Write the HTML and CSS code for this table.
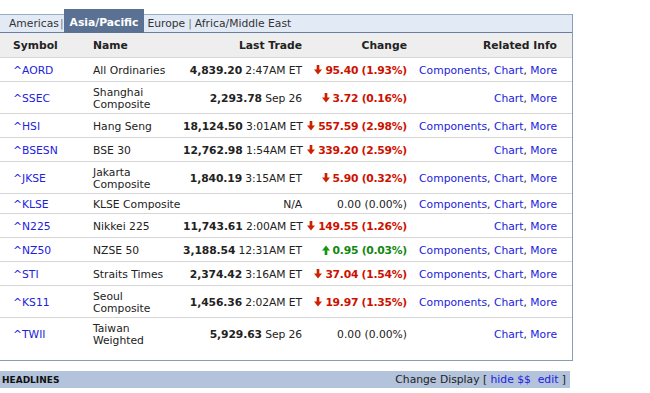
FILE: index.html
```html
<!DOCTYPE html>
<html>
<head>
<meta charset="utf-8">
<link rel="stylesheet" href="styles.css">
</head>
<body>
<div class="box">
  <div class="tabs">
    <span class="tab">Americas</span><span class="sep">|</span><span class="tab active">Asia/Pacific</span><span class="tab">Europe</span><span class="sep wide">|</span><span class="tab">Africa/Middle East</span>
  </div>
  <div class="row head">
    <div class="c1">Symbol</div><div class="c2">Name</div><div class="c3">Last Trade</div><div class="c4">Change</div><div class="c5">Related Info</div>
  </div>
  <div class="row">
    <div class="c1"><a>^AORD</a></div><div class="c2">All Ordinaries</div><div class="c3"><b>4,839.20</b> 2:47AM ET</div><div class="c4 dn"><svg class="arr" viewBox="0 0 9 11"><path d="M3 0h3v5h3l-4.5 5.5L0 5h3z"/></svg>95.40 (1.93%)</div><div class="c5"><a>Components</a>, <a>Chart</a>, <a>More</a></div>
  </div>
  <div class="row dbl">
    <div class="c1"><a>^SSEC</a></div><div class="c2">Shanghai<br>Composite</div><div class="c3"><b>2,293.78</b> Sep 26</div><div class="c4 dn"><svg class="arr" viewBox="0 0 9 11"><path d="M3 0h3v5h3l-4.5 5.5L0 5h3z"/></svg>3.72 (0.16%)</div><div class="c5"><a>Chart</a>, <a>More</a></div>
  </div>
  <div class="row">
    <div class="c1"><a>^HSI</a></div><div class="c2">Hang Seng</div><div class="c3"><b>18,124.50</b> 3:01AM ET</div><div class="c4 dn"><svg class="arr" viewBox="0 0 9 11"><path d="M3 0h3v5h3l-4.5 5.5L0 5h3z"/></svg>557.59 (2.98%)</div><div class="c5"><a>Components</a>, <a>Chart</a>, <a>More</a></div>
  </div>
  <div class="row">
    <div class="c1"><a>^BSESN</a></div><div class="c2">BSE 30</div><div class="c3"><b>12,762.98</b> 1:54AM ET</div><div class="c4 dn"><svg class="arr" viewBox="0 0 9 11"><path d="M3 0h3v5h3l-4.5 5.5L0 5h3z"/></svg>339.20 (2.59%)</div><div class="c5"><a>Chart</a>, <a>More</a></div>
  </div>
  <div class="row dbl">
    <div class="c1"><a>^JKSE</a></div><div class="c2">Jakarta<br>Composite</div><div class="c3"><b>1,840.19</b> 3:15AM ET</div><div class="c4 dn"><svg class="arr" viewBox="0 0 9 11"><path d="M3 0h3v5h3l-4.5 5.5L0 5h3z"/></svg>5.90 (0.32%)</div><div class="c5"><a>Components</a>, <a>Chart</a>, <a>More</a></div>
  </div>
  <div class="row short">
    <div class="c1"><a>^KLSE</a></div><div class="c2">KLSE Composite</div><div class="c3">N/A</div><div class="c4">0.00 (0.00%)</div><div class="c5"><a>Components</a>, <a>Chart</a>, <a>More</a></div>
  </div>
  <div class="row">
    <div class="c1"><a>^N225</a></div><div class="c2">Nikkei 225</div><div class="c3"><b>11,743.61</b> 2:00AM ET</div><div class="c4 dn"><svg class="arr" viewBox="0 0 9 11"><path d="M3 0h3v5h3l-4.5 5.5L0 5h3z"/></svg>149.55 (1.26%)</div><div class="c5"><a>Chart</a>, <a>More</a></div>
  </div>
  <div class="row">
    <div class="c1"><a>^NZ50</a></div><div class="c2">NZSE 50</div><div class="c3"><b>3,188.54</b> 12:31AM ET</div><div class="c4 up"><svg class="arr" viewBox="0 0 9 11"><path d="M4.5 0.5L9 6H6v5H3V6H0z"/></svg>0.95 (0.03%)</div><div class="c5"><a>Components</a>, <a>Chart</a>, <a>More</a></div>
  </div>
  <div class="row">
    <div class="c1"><a>^STI</a></div><div class="c2">Straits Times</div><div class="c3"><b>2,374.42</b> 3:16AM ET</div><div class="c4 dn"><svg class="arr" viewBox="0 0 9 11"><path d="M3 0h3v5h3l-4.5 5.5L0 5h3z"/></svg>37.04 (1.54%)</div><div class="c5"><a>Components</a>, <a>Chart</a>, <a>More</a></div>
  </div>
  <div class="row dbl">
    <div class="c1"><a>^KS11</a></div><div class="c2">Seoul<br>Composite</div><div class="c3"><b>1,456.36</b> 2:02AM ET</div><div class="c4 dn"><svg class="arr" viewBox="0 0 9 11"><path d="M3 0h3v5h3l-4.5 5.5L0 5h3z"/></svg>19.97 (1.35%)</div><div class="c5"><a>Components</a>, <a>Chart</a>, <a>More</a></div>
  </div>
  <div class="row dbl last">
    <div class="c1"><a>^TWII</a></div><div class="c2">Taiwan<br>Weighted</div><div class="c3"><b>5,929.63</b> Sep 26</div><div class="c4">0.00 (0.00%)</div><div class="c5"><a>Chart</a>, <a>More</a></div>
  </div>
</div>
<div class="headlines">
  <span class="hl-title">HEADLINES</span>
  <span class="hl-right">Change Display [ <a>hide $$</a>&nbsp; <a>edit</a> ]</span>
</div>
</body>
</html>
```

FILE: styles.css
```css
html, body {
  margin: 0;
  padding: 0;
  background: #fff;
}
body {
  font-family: "DejaVu Sans", Verdana, sans-serif;
  font-size: 10.75px;
  color: #222;
  width: 650px;
}
a {
  color: #2121dd;
  text-decoration: none;
}
.box {
  width: 572px;
  border-right: 1px solid #8a9cb9;
  border-bottom: 1px solid #8a9cb9;
  padding-bottom: 10px;
  margin-top: 14px;
}
.tabs {
  display: flex;
  align-items: stretch;
  height: 17px;
  background: #e2eaf6;
  border-top: 1px solid #9aabc5;
  border-bottom: 1px solid #6a7f9f;
  padding-left: 9px;
  line-height: 18px;
}
.tab {
  color: #333;
}
.sep {
  color: #777;
  padding: 0 0 0 1px;
}
.sep.wide {
  padding: 0 3px 0 3px;
}
.tab.active {
  background: #5b7194;
  color: #fff;
  font-weight: bold;
  margin-top: -6px;
  margin-bottom: -1px;
  padding: 5px 6px 0 6px;
  height: 19px;
  margin-right: 3px;
}
.row {
  display: grid;
  grid-template-columns: 93px 90px 122px 105px 162px;
  align-items: center;
  height: 24px;
  box-sizing: border-box;
  border-bottom: 1px solid #d6d6d6;
  line-height: 12px;
  padding-top: 2px;
  white-space: nowrap;
}
.row.dbl { height: 32px; }
.row.short { height: 20px; }
.row.last { border-bottom: none; }
.row.head {
  height: 25px;
  padding-top: 1px;
  background: #eeeeee;
  font-weight: bold;
}
.c1 { padding-left: 13px; }
.c3, .c4 { text-align: right; padding-right: 3px; }
.row:not(.head) .c3 { letter-spacing: -0.1px; }
.c5 { text-align: right; padding-right: 15px; }
.c4.dn { color: #cc1100; font-weight: bold; letter-spacing: -0.25px; }
.c4.up { color: #118811; font-weight: bold; letter-spacing: -0.25px; }
.arr {
  width: 8px;
  height: 10px;
  vertical-align: -1px;
  margin-right: 3px;
  fill: currentColor;
}
.dn .arr { fill: #cc2200; }
.up .arr { fill: #119911; }
.headlines {
  margin-top: 10px;
  width: 570px;
  height: 17px;
  background: #b2c3db;
  display: flex;
  justify-content: space-between;
  align-items: center;
  padding: 0 4px 0 2px;
  box-sizing: border-box;
}
.hl-title {
  font-weight: bold;
  font-size: 9px;
  color: #111;
}
.hl-right {
  color: #222;
}
```
